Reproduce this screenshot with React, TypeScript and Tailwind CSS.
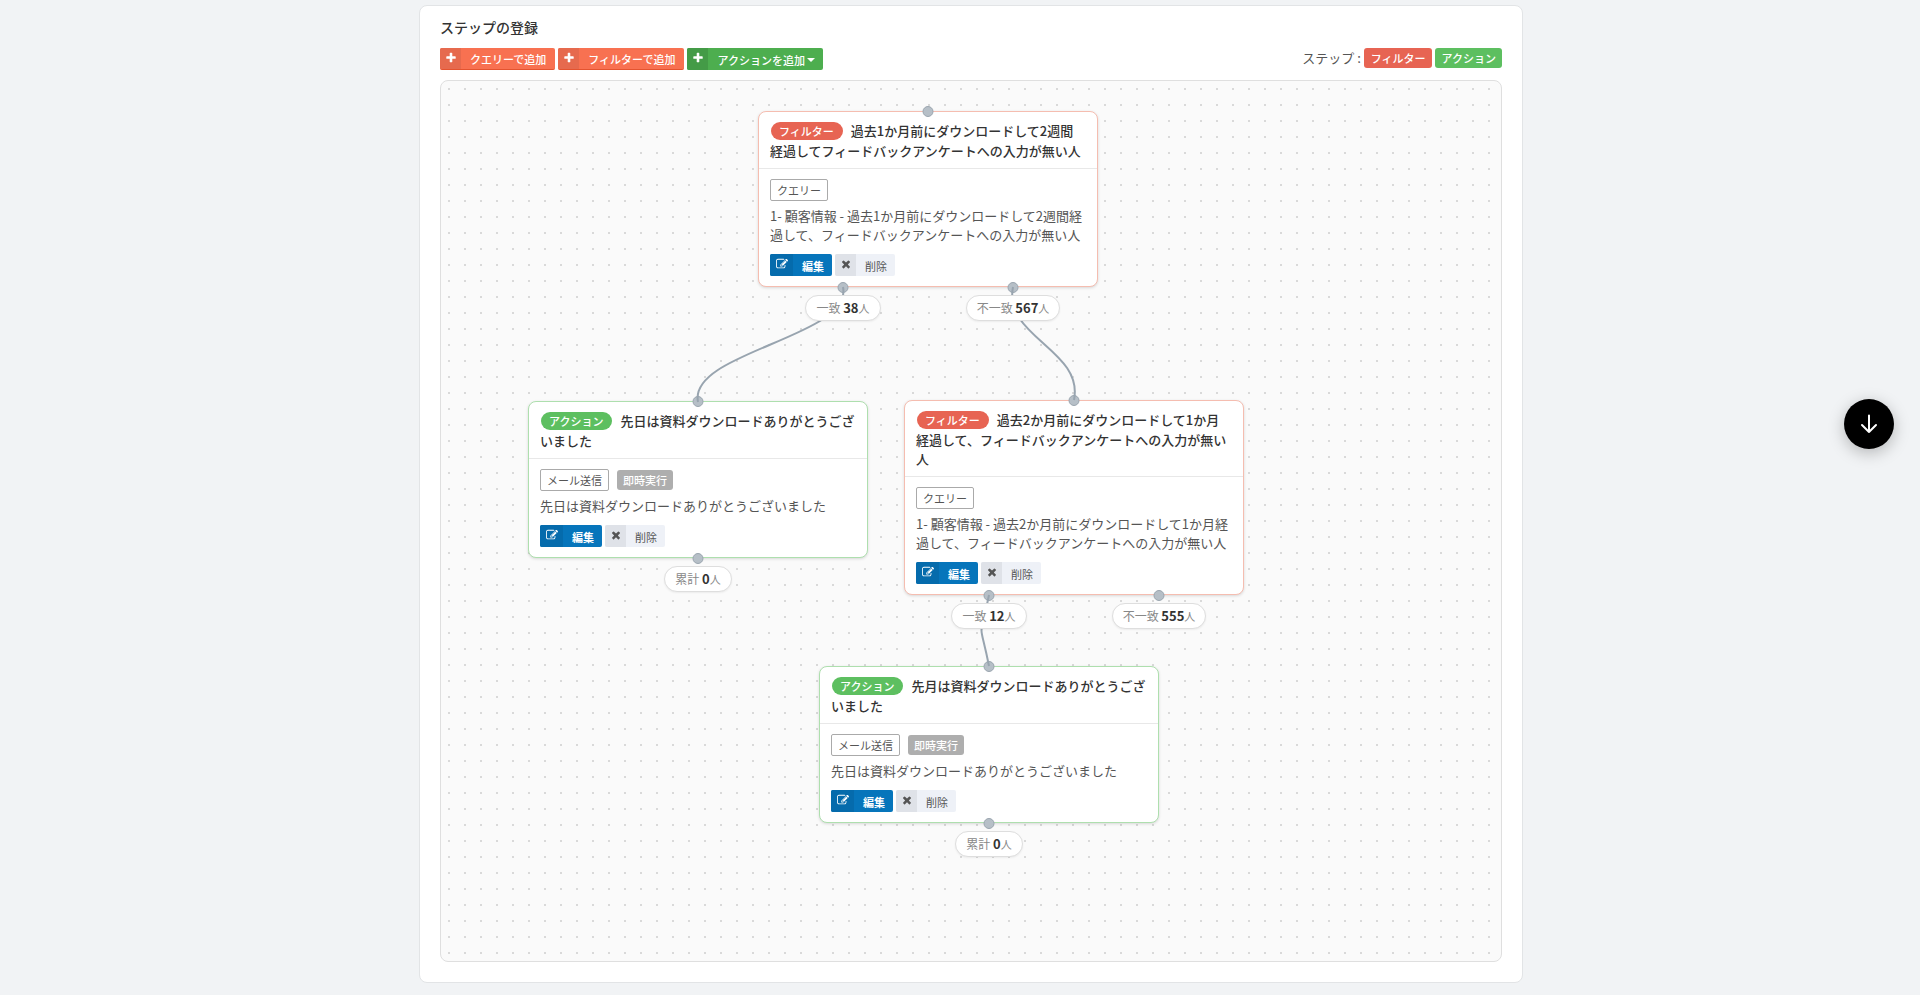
import React from 'react';
import clsx from 'clsx';

type Kind = 'filter' | 'action';

type Output = { label: string; count: number };

type FlowNode = {
  id: string;
  kind: Kind;
  title: string;
  type: string;
  timing?: string;
  description: string;
  outputs: Output[];
  place: string;
};

const NODES: FlowNode[] = [
  {
    id: 'n1',
    kind: 'filter',
    title: '過去1か月前にダウンロードして2週間経過してフィードバックアンケートへの入力が無い人',
    type: 'クエリー',
    description: '1- 顧客情報 - 過去1か月前にダウンロードして2週間経過して、フィードバックアンケートへの入力が無い人',
    outputs: [
      { label: '一致', count: 38 },
      { label: '不一致', count: 567 },
    ],
    place: 'left-[317px] top-[30px]',
  },
  {
    id: 'n2',
    kind: 'action',
    title: '先日は資料ダウンロードありがとうございました',
    type: 'メール送信',
    timing: '即時実行',
    description: '先日は資料ダウンロードありがとうございました',
    outputs: [{ label: '累計', count: 0 }],
    place: 'left-[87px] top-[320px]',
  },
  {
    id: 'n3',
    kind: 'filter',
    title: '過去2か月前にダウンロードして1か月経過して、フィードバックアンケートへの入力が無い人',
    type: 'クエリー',
    description: '1- 顧客情報 - 過去2か月前にダウンロードして1か月経過して、フィードバックアンケートへの入力が無い人',
    outputs: [
      { label: '一致', count: 12 },
      { label: '不一致', count: 555 },
    ],
    place: 'left-[463px] top-[319px]',
  },
  {
    id: 'n4',
    kind: 'action',
    title: '先月は資料ダウンロードありがとうございました',
    type: 'メール送信',
    timing: '即時実行',
    description: '先日は資料ダウンロードありがとうございました',
    outputs: [{ label: '累計', count: 0 }],
    place: 'left-[378px] top-[585px]',
  },
];

const EDGES = [
  'M402 206C412 256 247 271 257 321',
  'M572 206C562 256 643 269 633 319',
  'M548 514C538 564 538 535 548 585',
];

const PLUS =
  'M1600 736v192q0 40-28 68t-68 28h-416v416q0 40-28 68t-68 28h-192q-40 0-68-28t-28-68v-416h-416q-40 0-68-28t-28-68v-192q0-40 28-68t68-28h416v-416q0-40 28-68t68-28h192q40 0 68 28t28 68v416h416q40 0 68 28t28 68z';
const PENCIL =
  'M888 1184l116-116-152-152-116 116v56h96v96h56zm440-720q-16-16-33 1l-350 350q-17 17-1 33t33-1l350-350q17-17 1-33zm80 594v190q0 119-84.5 203.5t-203.5 84.5h-832q-119 0-203.5-84.5t-84.5-203.5v-832q0-119 84.5-203.5t203.5-84.5h832q63 0 117 25 15 7 18 23 3 17-9 29l-49 49q-14 14-32 8-23-6-45-6h-832q-66 0-113 47t-47 113v832q0 66 47 113t113 47h832q66 0 113-47t47-113v-126q0-13 9-22l64-64q15-15 35-7t20 29zm-96-738l288 288-672 672h-288v-288zm444 132l-92 92-288-288 92-92q28-28 68-28t68 28l152 152q28 28 28 68t-28 68z';
const TIMES =
  'M1490 1322q0 40-28 68l-136 136q-28 28-68 28t-68-28l-294-294-294 294q-28 28-68 28t-68-28l-136-136q-28-28-28-68t28-68l294-294-294-294q-28-28-28-68t28-68l136-136q28-28 68-28t68 28l294 294 294-294q28-28 68-28t68 28l136 136q28 28 28 68t-28 68l-294 294 294 294q28 28 28 68z';

function Icon({ d }: { d: string }) {
  return (
    <svg viewBox="0 0 1792 1792" className="size-3 fill-current" aria-hidden="true">
      <path d={d} />
    </svg>
  );
}

const TONES = {
  orange: {
    button: 'border-b border-[#e4532f] bg-[#f87151] font-medium text-white',
    icon: 'w-[21px] bg-[#e66a4e]',
    label: 'pr-[9px]',
  },
  green: { button: 'bg-[#4dae4f] font-medium text-white', icon: 'w-[21px] bg-[#449b47]', label: 'pr-2' },
  blue: { button: 'bg-[#0675bb] font-bold text-white', icon: 'w-[23px] bg-[#056bac]', label: 'pr-2' },
  gray: { button: 'bg-[#eef1f7] text-[#555]', icon: 'w-[21px] bg-[#dfe2e8]', label: 'pr-2' },
};

function IconButton({
  tone,
  icon,
  caret,
  children,
}: {
  tone: keyof typeof TONES;
  icon: string;
  caret?: boolean;
  children: React.ReactNode;
}) {
  return (
    <button
      type="button"
      className={clsx('flex h-[22px] items-stretch overflow-hidden rounded-xs text-[11px]', TONES[tone].button)}
    >
      <span className={clsx('flex justify-center pt-1', TONES[tone].icon)}>
        <Icon d={icon} />
      </span>
      <span className={clsx('flex items-center gap-[2px] pt-px pl-[9px] leading-[22px]', TONES[tone].label)}>
        {children}
        {caret && (
          <svg viewBox="0 0 8 4" className="mt-px h-1 w-2 fill-current" aria-hidden="true">
            <path d="M0 0h8L4 4z" />
          </svg>
        )}
      </span>
    </button>
  );
}

const KIND_LABEL: Record<Kind, string> = { filter: 'フィルター', action: 'アクション' };
const KIND_BG: Record<Kind, string> = { filter: 'bg-[#e76453]', action: 'bg-[#5dbf60]' };

function Port({ place }: { place: string }) {
  return (
    <span
      className={clsx(
        'absolute size-[11px] -translate-x-1/2 rounded-full border border-[#9aa5af] bg-[#b6bfc7]',
        place,
      )}
    />
  );
}

function NodeCard({ node }: { node: FlowNode }) {
  const split = node.outputs.length > 1;
  return (
    <article className={clsx('absolute w-[340px]', node.place)}>
      <div
        className={clsx(
          'rounded-lg border bg-white shadow-[0_1px_3px_rgba(0,0,0,0.14)]',
          node.kind === 'filter' ? 'border-[#f5bdb0]' : 'border-[#aedfae]',
        )}
      >
        <h2 className="border-b border-[#e8e8e8] px-[11px] pt-[9px] pb-[8px] text-[13px] leading-[19px] font-medium text-[#333]">
          <span
            className={clsx(
              'mr-2 mb-px ml-px inline-block rounded-full pr-[9px] pl-2 text-[11px] leading-[18px] font-medium text-white',
              KIND_BG[node.kind],
            )}
          >
            {KIND_LABEL[node.kind]}
          </span>
          {node.title}
        </h2>
        <div className="px-[11px] py-[10px]">
          <div className="flex items-center gap-2 text-[11px]">
            <span className="rounded-xs border border-[#aaa] px-[6px] leading-5 text-[#555]">{node.type}</span>
            {node.timing && (
              <span className="rounded-[3px] bg-[#aeaeae] px-[6px] leading-5 font-medium text-white">{node.timing}</span>
            )}
          </div>
          <p className="mt-[5px] text-[13px] leading-[19px] text-[#555]">{node.description}</p>
          <div className="mt-[10px] flex gap-[3px]">
            <IconButton tone="blue" icon={PENCIL}>
              編集
            </IconButton>
            <IconButton tone="gray" icon={TIMES}>
              削除
            </IconButton>
          </div>
        </div>
      </div>
      <Port place="left-1/2 -top-[5px]" />
      {split ? (
        <>
          <Port place="left-1/4 -bottom-[6px]" />
          <Port place="left-3/4 -bottom-[6px]" />
        </>
      ) : (
        <Port place="left-1/2 -bottom-[6px]" />
      )}
      <div className={clsx('absolute inset-x-0 top-full z-20 grid pt-2', split ? 'grid-cols-2' : 'grid-cols-1')}>
        {node.outputs.map((output) => (
          <div key={output.label} className="flex justify-center">
            <span className="rounded-full border border-[#dedede] bg-white px-[10px] text-[12px] leading-[23px] text-[#888] shadow-[0_1px_2px_rgba(0,0,0,0.06)]">
              {output.label} <b className="text-[13px] font-bold text-[#333]">{output.count}</b>
              <span className="text-[11px]">人</span>
            </span>
          </div>
        ))}
      </div>
    </article>
  );
}

function KindTag({ kind }: { kind: Kind }) {
  return (
    <span className={clsx('rounded-[3px] pr-[6px] pl-[7px] text-[11px] leading-5 font-medium text-white', KIND_BG[kind])}>
      {KIND_LABEL[kind]}
    </span>
  );
}

export default function App() {
  return (
    <div
      lang="ja"
      className="min-h-screen bg-[#f1f3f5] pt-[5px] pb-3 pl-[22px] font-['Noto_Sans_CJK_JP',sans-serif] text-[#555]"
    >
      <main className="mx-auto max-w-[1104px] rounded-lg border border-[#e2e4e6] bg-white px-5 pt-[11px] pb-5">
        <h1 className="text-[14px] leading-5 font-medium text-[#333]">ステップの登録</h1>
        <div className="mt-[11px] flex items-start justify-between">
          <div className="flex gap-[3px]">
            <IconButton tone="orange" icon={PLUS}>
              クエリーで追加
            </IconButton>
            <IconButton tone="orange" icon={PLUS}>
              フィルターで追加
            </IconButton>
            <IconButton tone="green" icon={PLUS} caret>
              アクションを追加
            </IconButton>
          </div>
          <div className="flex items-center gap-[3px] text-[13px] leading-5">
            <span>ステップ :</span>
            <KindTag kind="filter" />
            <KindTag kind="action" />
          </div>
        </div>
        <section
          aria-label="ステップ"
          className="relative mt-[10px] h-[882px] overflow-hidden rounded-lg border border-[#dfdfdf] bg-[#fafafa] bg-[radial-gradient(#d9d9d9_1px,transparent_1px)] bg-[length:16px_16px]"
        >
          {NODES.map((node) => (
            <NodeCard key={node.id} node={node} />
          ))}
          <svg
            className="pointer-events-none absolute inset-0 z-10 size-full fill-none stroke-[#98a4af]"
            strokeWidth="2"
            aria-hidden="true"
          >
            {EDGES.map((d) => (
              <path key={d} d={d} />
            ))}
          </svg>
        </section>
      </main>
      <button
        type="button"
        aria-label="下へ"
        className="fixed top-[399px] right-[26px] flex size-[50px] items-center justify-center rounded-full bg-black text-white shadow-[0_4px_16px_rgba(0,0,0,0.25)]"
      >
        <svg
          viewBox="0 0 24 24"
          className="size-6 fill-none stroke-current"
          strokeWidth="2"
          strokeLinecap="round"
          strokeLinejoin="round"
          aria-hidden="true"
        >
          <path d="M12 3.5V20M5 13l7 7 7-7" />
        </svg>
      </button>
    </div>
  );
}
